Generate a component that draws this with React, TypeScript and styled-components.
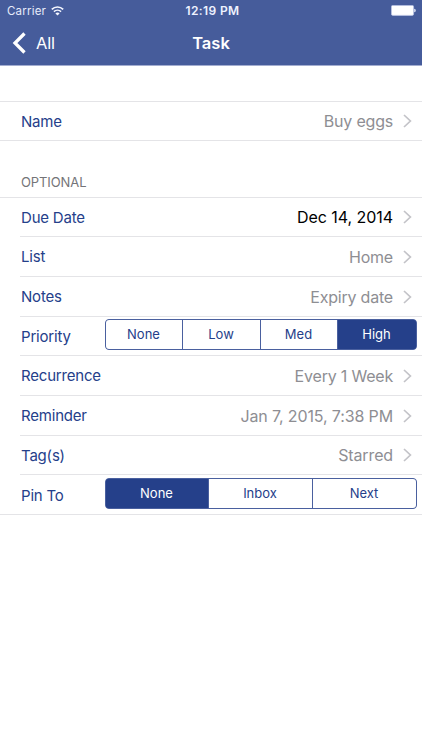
import React from "react";
import styled, { createGlobalStyle } from "styled-components";

const GlobalStyle = createGlobalStyle`
  * { box-sizing: border-box; }
  body {
    margin: 0;
    background: #fff;
    font-family: Inter, "Liberation Sans", sans-serif;
  }
`;

const NAVY = "#25408a";

const Screen = styled.main`
  width: 422px;
  height: 750px;
  overflow: hidden;
  background: #fff;
`;

const Header = styled.header`
  height: 66px;
  background: #465c9b;
  border-bottom: 1px solid #a3add0;
  color: #fff;
`;

const StatusBar = styled.div`
  display: grid;
  grid-template-columns: 1fr auto 1fr;
  align-items: center;
  height: 21px;
  padding: 0 6px 0 7px;
  font-size: 11.5px;
`;

const Carrier = styled.div`
  display: flex;
  align-items: center;
  gap: 5px;
  letter-spacing: 0.2px;
  color: #e6ebfa;
`;

const Clock = styled.div`
  font-size: 12px;
  font-weight: 600;
  letter-spacing: 0.4px;
  padding-left: 2px;
  color: #eef2ff;
`;

const BatteryIcon = styled.svg`
  justify-self: end;
`;

const NavBar = styled.nav`
  display: grid;
  grid-template-columns: 1fr auto 1fr;
  align-items: center;
  height: 44px;
`;

const BackButton = styled.div`
  display: flex;
  align-items: center;
  gap: 10px;
  padding-left: 12px;
  font-size: 16.5px;
  letter-spacing: -0.2px;
`;

const Title = styled.h1`
  margin: 0;
  font-size: 16.5px;
  line-height: 20px;
  font-weight: 600;
  letter-spacing: 0;
`;

const Spacer = styled.div`
  height: 36px;
  border-bottom: 1px solid #e4e4e7;
`;

const SectionTitle = styled.h2`
  display: flex;
  align-items: flex-end;
  height: 57px;
  margin: 0;
  padding: 0 21px 7px;
  border-bottom: 1px solid #e4e4e7;
  font-size: 13px;
  line-height: 16px;
  font-weight: 400;
  letter-spacing: -0.1px;
  color: #747478;
`;

const Row = styled.div<{ $height: number; $inset?: boolean }>`
  display: flex;
  align-items: center;
  height: ${(p) => p.$height}px;
  margin-left: ${(p) => (p.$inset ? 20 : 0)}px;
  padding-left: ${(p) => (p.$inset ? 1 : 21)}px;
  padding-right: 10px;
  border-bottom: 1px solid #e4e4e7;
`;

const ControlRow = styled(Row)<{ $top: number }>`
  align-items: flex-start;
  padding-top: ${(p) => p.$top}px;
  padding-right: 5px;
`;

const Label = styled.span`
  flex: 1;
  padding-top: 1px;
  font-size: 15px;
  line-height: 20px;
  letter-spacing: -0.2px;
  color: ${NAVY};
`;

const ControlLabel = styled(Label)`
  padding-top: 8px;
`;

const Value = styled.span<{ $dark?: boolean; $tracking: number }>`
  margin-right: 10px;
  font-size: 16px;
  line-height: 20px;
  letter-spacing: ${(p) => p.$tracking}px;
  color: ${(p) => (p.$dark ? "#000" : "#8e8e93")};
`;

const Segments = styled.div<{ $columns: string }>`
  display: grid;
  grid-template-columns: ${(p) => p.$columns};
  width: 312px;
  height: 31px;
  border: 1px solid #4a609f;
  border-radius: 4px;
  overflow: hidden;
  background: ${NAVY};
`;

const Segment = styled.div<{ $selected: boolean }>`
  display: flex;
  align-items: center;
  justify-content: center;
  padding: 0 1px 0 0;
  font-size: 13px;
  line-height: 16px;
  background: ${(p) => (p.$selected ? NAVY : "#fff")};
  color: ${(p) => (p.$selected ? "#fff" : NAVY)};
  & + & {
    border-left: 1px solid #4a609f;
  }
`;

const SegmentText = styled.span`
  padding-bottom: 1px;
`;

const Disclosure = () => (
  <svg width="9" height="14" viewBox="0 0 9 14" fill="none">
    <path d="M1 1L7.4 7L1 13" stroke="#c3c3c8" strokeWidth="1.7" />
  </svg>
);

type FieldProps = {
  label: string;
  value: string;
  height: number;
  inset?: boolean;
  dark?: boolean;
  tracking?: number;
};

const Field = ({ label, value, height, inset, dark, tracking = -0.2 }: FieldProps) => (
  <Row $height={height} $inset={inset}>
    <Label>{label}</Label>
    <Value $dark={dark} $tracking={tracking}>{value}</Value>
    <Disclosure />
  </Row>
);

type ChoiceProps = {
  label: string;
  options: string[];
  selected: string;
  columns: string;
  height: number;
  top: number;
  inset?: boolean;
};

const Choice = ({ label, options, selected, columns, height, top, inset }: ChoiceProps) => (
  <ControlRow $height={height} $inset={inset} $top={top}>
    <ControlLabel>{label}</ControlLabel>
    <Segments $columns={columns}>
      {options.map((option) => (
        <Segment key={option} $selected={option === selected}>
          <SegmentText>{option}</SegmentText>
        </Segment>
      ))}
    </Segments>
  </ControlRow>
);

export default function App() {
  return (
    <>
      <GlobalStyle />
      <Screen>
        <Header>
          <StatusBar>
            <Carrier>
              Carrier
              <svg width="13" height="10" viewBox="0 0 13 10" fill="none" stroke="#f4f6ff">
                <path d="M0.8 3.4C4 0.2 9 0.2 12.2 3.4" strokeWidth="1.7" />
                <path d="M2.9 5.7C5 3.7 8 3.7 10.1 5.7" strokeWidth="1.6" />
                <path d="M4.4 7.4C5.6 6.3 7.4 6.3 8.6 7.4L6.5 9.6Z" fill="#f4f6ff" stroke="none" />
              </svg>
            </Carrier>
            <Clock>12:19 PM</Clock>
            <BatteryIcon width="25" height="11" viewBox="0 0 25 11">
              <rect x="0.4" y="0.4" width="22.2" height="10" rx="1.4" fill="#fff" stroke="#b9c3e2" strokeWidth="0.8" />
              <path d="M23.2 3.7C25.3 3.9 25.3 7 23.2 7.2Z" fill="#e2e7f6" />
            </BatteryIcon>
          </StatusBar>
          <NavBar>
            <BackButton>
              <svg width="14" height="22" viewBox="0 0 14 22" fill="none">
                <path d="M12.5 1.5L3 11L12.5 20.5" stroke="#fff" strokeWidth="3.3" />
              </svg>
              All
            </BackButton>
            <Title>Task</Title>
          </NavBar>
        </Header>
        <Spacer />
        <Field label="Name" value="Buy eggs" height={39} />
        <SectionTitle>OPTIONAL</SectionTitle>
        <Field label="Due Date" value="Dec 14, 2014" height={39} inset dark tracking={-0.05} />
        <Field label="List" value="Home" height={40} inset />
        <Field label="Notes" value="Expiry date" height={40} inset />
        <Choice
          label="Priority"
          options={["None", "Low", "Med", "High"]}
          selected="High"
          columns="76px 78px 77px 79px"
          height={39}
          top={2}
          inset
        />
        <Field label="Recurrence" value="Every 1 Week" height={40} inset />
        <Field label="Reminder" value="Jan 7, 2015, 7:38 PM" height={40} inset tracking={-0.13} />
        <Field label="Tag(s)" value="Starred" height={39} inset tracking={-0.13} />
        <Choice
          label="Pin To"
          options={["None", "Inbox", "Next"]}
          selected="None"
          columns="102px 104px 104px"
          height={40}
          top={3}
        />
      </Screen>
    </>
  );
}
